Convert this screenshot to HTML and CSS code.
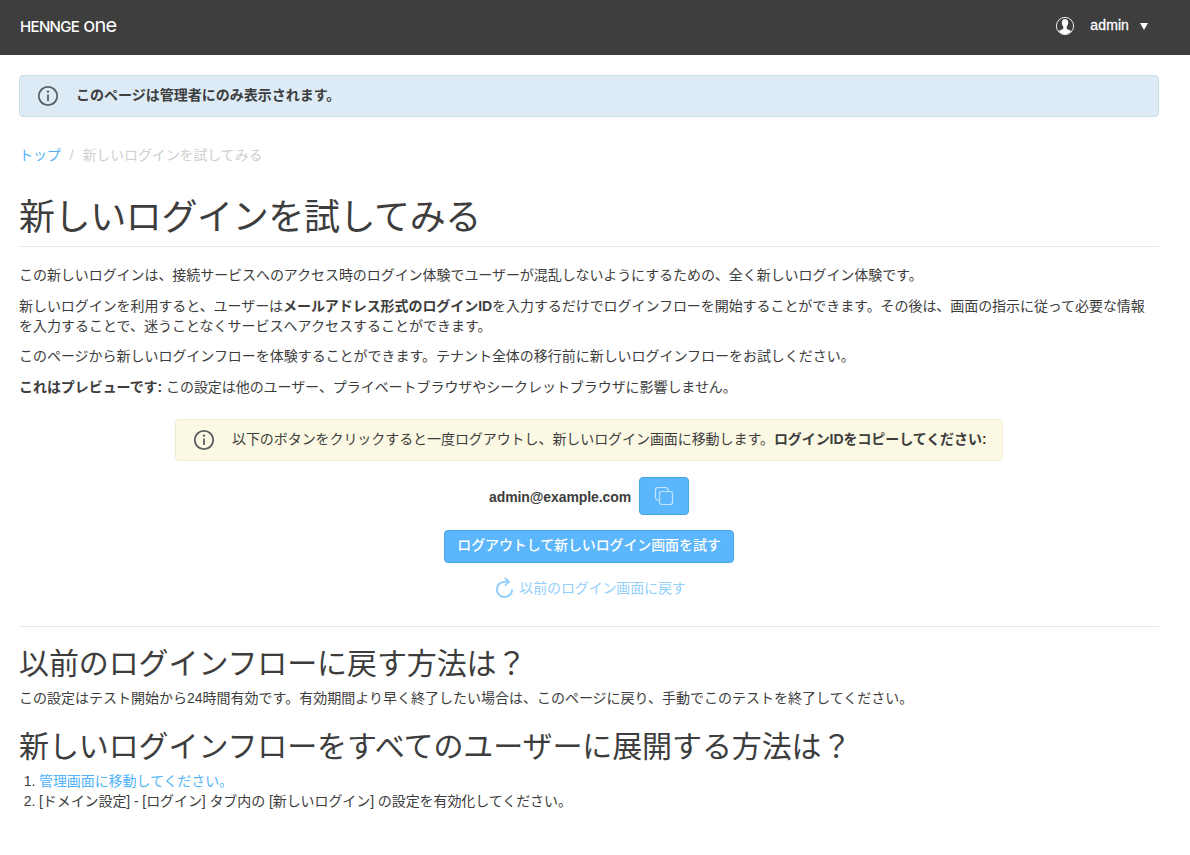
FILE: index.html
```html
<!DOCTYPE html>
<html lang="ja">
<head>
<meta charset="utf-8">
<title>新しいログインを試してみる</title>
<link rel="stylesheet" href="styles.css">
</head>
<body>
<header class="navbar">
  <div class="brand">HENNGE<span class="brand-one">one</span></div>
  <div class="user">
    <svg class="avatar" width="20" height="20" viewBox="0 0 20 20"><circle cx="10" cy="10" r="8.600" fill="none" stroke="#fff" stroke-width=".9"/><path d="M10 3c2.200 0 3.200 1.500 3.200 3.600 0 1.700-.5 3.100-1.500 4.100v1.800c.6 1.100 3.300 1.200 4.400 2.500-1.400 2-3.500 3.300-6.100 3.300s-4.700-1.300-6.100-3.300c1.100-1.300 3.800-1.400 4.400-2.500v-1.800c-1-1-1.500-2.400-1.500-4.100 0-2.100 1-3.600 3.200-3.600z" fill="#fff"/></svg>
    <span class="user-name">admin</span>
    <span class="caret"></span>
  </div>
</header>
<main class="content">
  <div class="alert alert-info">
    <svg class="info" width="22" height="22" viewBox="0 0 22 22"><circle cx="11" cy="11" r="9.200"/><path d="M11 9.500v6.500"/><circle class="dot" cx="11" cy="6.600" r="1.200"/></svg>
    <strong class="alert-text">このページは管理者にのみ表示されます。</strong>
  </div>
  <nav class="breadcrumb"><a class="link" href="#">トップ</a><span class="sep">/</span><span>新しいログインを試してみる</span></nav>
  <h1 class="title">新しいログインを試してみる</h1>
  <p>この新しいログインは、接続サービスへのアクセス時のログイン体験でユーザーが混乱しないようにするための、全く新しいログイン体験です。</p>
  <p>新しいログインを利用すると、ユーザーは<strong>メールアドレス形式のログインID</strong>を入力するだけでログインフローを開始することができます。その後は、画面の指示に従って必要な情報<br><span class="even">を入力することで、迷うことなくサービスへアクセスすることができます。</span></p>
  <p class="slim">このページから新しいログインフローを体験することができます。テナント全体の移行前に新しいログインフローをお試しください。</p>
  <p><strong>これはプレビューです:</strong> この設定は他のユーザー、プライベートブラウザやシークレットブラウザに影響しません。</p>
  <section class="actions">
    <div class="alert alert-warning">
      <svg class="info" width="22" height="22" viewBox="0 0 22 22"><circle cx="11" cy="11" r="9.200"/><path d="M11 9.500v6.500"/><circle class="dot" cx="11" cy="6.600" r="1.200"/></svg>
      <span class="alert-text">以下のボタンをクリックすると一度ログアウトし、新しいログイン画面に移動します。<strong>ログインIDをコピーしてください:</strong></span>
    </div>
    <div class="login-id"><strong class="address">admin@example.com</strong>
      <button class="btn btn-copy" aria-label="コピー"><svg width="20" height="20" viewBox="0 0 20 20"><rect x="1.500" y="1.500" width="12.500" height="12.500" rx="2.500"/><rect class="front" x="5.500" y="5.500" width="13" height="13" rx="2.500"/></svg></button>
    </div>
    <button class="btn btn-try">ログアウトして新しいログイン画面を試す</button>
    <div class="revert"><svg width="20" height="22" viewBox="0 0 20 22"><path d="M15 4.800H10.500A7.600 7.600 0 1 0 18.100 12.400"/><path d="M11 1l3.800 3.800L11 8.600"/></svg><span>以前のログイン画面に戻す</span></div>
  </section>
  <h2>以前のログインフローに戻す方法は？</h2>
  <p class="even">この設定はテスト開始から24時間有効です。有効期間より早く終了したい場合は、このページに戻り、手動でこのテストを終了してください。</p>
  <h2 class="rollout">新しいログインフローをすべてのユーザーに展開する方法は？</h2>
  <ol class="steps">
    <li><a class="link" href="#">管理画面に移動してください。</a></li>
    <li>[ドメイン設定] - [ログイン] タブ内の [新しいログイン] の設定を有効化してください。</li>
  </ol>
</main>
</body>
</html>
```
FILE: styles.css
```css
* { box-sizing: border-box; }
body { margin: 0; background: #fff; color: #3d3d3d; font: 14px/20px "Liberation Sans", "Noto Sans CJK JP", sans-serif; }
.navbar { height: 55px; background: #3e3e3e; color: #fff; display: flex; justify-content: space-between; align-items: center; padding: 0 42px 4px 20px; }
.brand { display: flex; align-items: baseline; font: 500 15px/20px Inter, sans-serif; letter-spacing: -.65px; }
.brand-one { font-size: 20px; font-weight: 400; letter-spacing: -.8px; margin-left: 4px; }
.user { display: flex; align-items: center; }
.avatar { margin-right: 15px; }
.user-name { -webkit-text-stroke: .3px #fff; margin-right: 11px; padding-bottom: 2px; letter-spacing: .1px; }
.caret { border: 4.500px solid transparent; border-top: 7px solid #fff; border-bottom: 0; margin-top: 1px; }
.content { padding: 20px 31px 0 19px; white-space: nowrap; }
.alert { display: flex; align-items: center; height: 42px; border: 1px solid; border-radius: 4px; padding: 0 17px; gap: 17px; }
.alert-info { background: #dcebf6; border-color: #cbdfeb; }
.alert-warning { background: #fbf8e3; border-color: #efead0; width: 828px; letter-spacing: -.07px; }
.alert-text { padding-bottom: 2px; }
.info { flex: none; fill: none; stroke: #5c6063; stroke-width: 1.800; }
.dot { fill: #5c6063; stroke: none; }
.breadcrumb { margin: 28px 0 0; color: #d0d0d0; letter-spacing: -.12px; }
.sep { margin: 0 9px; }
.link { color: #52b3fa; text-decoration: none; }
.title { margin: 28px 0 18px; height: 54px; border-bottom: 1px solid #e8e8e8; font-size: 36px; line-height: 50px; font-weight: 400; letter-spacing: -.38px; }
p { margin: 0 0 10.500px; letter-spacing: -.06px; }
.slim { letter-spacing: -.03px; }
.even { letter-spacing: 0; }
.actions { display: flex; flex-direction: column; align-items: center; margin-top: 22px; height: 208px; border-bottom: 1px solid #e8e8e8; }
.login-id { display: flex; align-items: center; gap: 8px; margin: 16px 0 15px; letter-spacing: -.09px; }
.address { padding-top: 2px; }
.btn { border: 1px solid #48a5e6; border-radius: 4px; background: #5bb6fc; color: #fff; font: inherit; padding: 0; display: flex; align-items: center; justify-content: center; }
.btn-copy { width: 50px; height: 38px; fill: none; stroke: #c4e4fe; stroke-width: 1.200; }
.front { fill: #5bb6fc; }
.btn-try { width: 290px; height: 33px; letter-spacing: -.12px; padding-bottom: 2px; font-weight: 500; }
.revert { display: flex; align-items: center; gap: 5px; margin: 14px 0 0 2px; color: #94d0fd; fill: none; stroke: #94d0fd; stroke-width: 2; letter-spacing: -.13px; }
h2 { font-size: 30px; line-height: 33px; font-weight: 400; margin: 20px 0 8px; letter-spacing: -.1px; }
.rollout { margin-top: 22px; margin-bottom: 8px; }
.steps { margin: 0; padding-left: 20px; letter-spacing: -.08px; }
```
